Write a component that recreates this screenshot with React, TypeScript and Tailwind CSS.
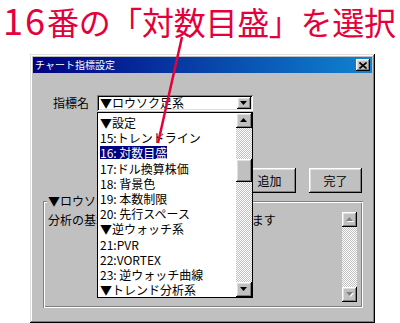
import React from "react";

const raised =
  "shadow-[inset_-1px_-1px_#000,inset_1px_1px_#fff,inset_-2px_-2px_#808080,inset_2px_2px_#dfdfdf]";
const windowFrame =
  "shadow-[inset_-1px_-1px_#000,inset_1px_1px_#dfdfdf,inset_-2px_-2px_#808080,inset_2px_2px_#fff]";
const sunken =
  "shadow-[inset_1px_1px_#808080,inset_-1px_-1px_#fff,inset_2px_2px_#000,inset_-2px_-2px_#dfdfdf]";
const etched =
  "shadow-[inset_1px_1px_#808080,inset_-1px_-1px_#fff,inset_2px_2px_#fff,inset_-2px_-2px_#808080]";
const dither =
  "bg-[conic-gradient(#c0c0c0_25%,#fff_0_50%,#c0c0c0_0_75%,#fff_0)] bg-[length:2px_2px]";

function Tri({ up, disabled }: { up?: boolean; disabled?: boolean }) {
  const d = up ? "M3.5 0L7 4H0z" : "M0 0h7L3.5 4z";
  return (
    <svg width="8" height="5" viewBox="0 0 8 5" className="block">
      {disabled && <path d={d} fill="#fff" transform="translate(1 1)" />}
      <path d={d} fill={disabled ? "#808080" : "#000"} />
    </svg>
  );
}

function ArrowBtn({ up, disabled }: { up?: boolean; disabled?: boolean }) {
  return (
    <div className={`w-full h-[15px] bg-[#c0c0c0] ${raised} flex items-center justify-center shrink-0`}>
      <Tri up={up} disabled={disabled} />
    </div>
  );
}

const items: { t: string; sel?: boolean }[] = [
  { t: "▼設定" },
  { t: "15:トレンドライン" },
  { t: "16: 対数目盛", sel: true },
  { t: "17:ドル換算株価" },
  { t: "18: 背景色" },
  { t: "19: 本数制限" },
  { t: "20: 先行スペース" },
  { t: "▼逆ウォッチ系" },
  { t: "21:PVR" },
  { t: "22:VORTEX" },
  { t: "23: 逆ウォッチ曲線" },
  { t: "▼トレンド分析系" },
];

export default function App() {
  return (
    <div
      className="relative w-[400px] h-[323px] overflow-hidden bg-white"
      style={{ fontFamily: '"Noto Sans CJK JP", "Noto Sans", sans-serif' }}
    >
      {/* annotation */}
      <div className="h-[54px] pl-[3px] flex items-start">
        <div className="text-[32px] leading-[40px] mt-[-1px] text-[#e4003a] whitespace-nowrap tracking-[-0.3px]">
          <span className="text-[36px] tracking-[2px]">16</span>番の「対数目盛」を選択
        </div>
      </div>

      {/* dialog */}
      <div className={`relative ml-[30px] w-[345px] h-[269px] bg-[#c0c0c0] ${windowFrame} p-[3px] flex flex-col`}>
        {/* title bar */}
        <div className="h-[16px] bg-[linear-gradient(to_right,#000080,#1084d0)] flex items-center justify-between pl-[2px] pr-[2px]">
          <span className="text-[10px] leading-[16px] text-white">チャート指標設定</span>
          <div className={`w-[14px] h-[12px] bg-[#c0c0c0] ${raised} flex items-center justify-center`}>
            <svg width="8" height="7" viewBox="0 0 8 7">
              <path d="M0.5 0.5L7.5 6.5M7.5 0.5L0.5 6.5" stroke="#000" strokeWidth="1.6" />
            </svg>
          </div>
        </div>

        {/* row 1: combo */}
        <div className="mt-[22px] flex items-center pl-[20px]">
          <span className="w-[44px] text-[12px] leading-[16px] text-black">指標名</span>
          <div className={`w-[156px] h-[16px] bg-white ${sunken} flex items-center justify-between pl-[3px] pr-[2px]`}>
            <span className="text-[12px] leading-[14px] text-black whitespace-nowrap">▼ロウソク足系</span>
            <div className={`w-[14px] h-[12px] bg-[#c0c0c0] ${raised} flex items-center justify-center`}>
              <Tri />
            </div>
          </div>
        </div>

        {/* row 2: buttons */}
        <div className="mt-[57px] flex justify-end gap-[13px] pr-[10px]">
          <div className={`w-[53px] h-[25px] bg-[#c0c0c0] ${raised} flex items-center justify-center text-[12px] text-black`}>
            追加
          </div>
          <div className={`w-[53px] h-[25px] bg-[#c0c0c0] ${raised} flex items-center justify-center text-[12px] text-black`}>
            完了
          </div>
        </div>

        {/* row 3: group box */}
        <div className={`relative mt-[8px] ml-[10px] w-[320px] h-[107px] ${etched} flex pt-[11px] pb-[6px] pl-[5px] pr-[6px]`}>
          <span className="absolute left-[4px] top-[-7px] bg-[#c0c0c0] px-[1px] text-[12px] leading-[14px] text-black whitespace-nowrap">
            ▼ロウソク足系
          </span>
          <div className="flex-1 text-[12px] leading-[16px] text-black whitespace-nowrap overflow-hidden">
            分析の基本となるロウソク足を設定します
          </div>
          <div className="w-[15px] h-full flex flex-col">
            <ArrowBtn up disabled />
            <div className={`flex-1 ${dither}`} />
            <ArrowBtn disabled />
          </div>
        </div>

        {/* dropdown list (overlay) */}
        <div className="absolute left-[67px] top-[58px] w-[156px] h-[186px] bg-white border border-black flex">
          <div className="flex-1 pt-[2px] pl-[2px] overflow-hidden">
            {items.map((it) => (
              <div key={it.t} className="h-[15.2px] flex items-center">
                <span
                  className={`text-[12px] leading-[13px] whitespace-nowrap ${
                    it.sel ? "bg-[#000080] text-white" : "text-black"
                  }`}
                >
                  {it.t}
                </span>
              </div>
            ))}
          </div>
          <div className="w-[16px] h-full flex flex-col">
            <ArrowBtn up />
            <div className={`flex-1 ${dither} pt-[31px]`}>
              <div className={`h-[23px] bg-[#c0c0c0] ${raised}`} />
            </div>
            <ArrowBtn />
          </div>
        </div>
      </div>

      {/* annotation pointer line */}
      <svg className="absolute left-0 top-0 pointer-events-none" width="400" height="323" viewBox="0 0 400 323">
        <line x1="182" y1="37" x2="158" y2="143" stroke="#e4003a" strokeWidth="2.5" />
      </svg>
    </div>
  );
}
